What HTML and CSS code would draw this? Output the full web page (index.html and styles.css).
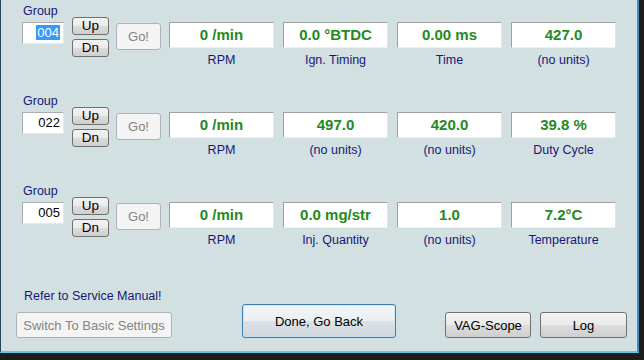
FILE: index.html
```html
<!DOCTYPE html>
<html lang="en">
<head>
    <meta charset="UTF-8">
    <title>Measuring Blocks</title>
    <link rel="stylesheet" href="styles.css">
</head>
<body>
    <div class="window">
        <div class="row">
            <div class="group">
                <div class="caption">Group</div>
                <div class="grp_input"><span class="sel">004</span></div>
            </div>
            <div class="updn">
                <button class="btn small">Up</button>
                <button class="btn small">Dn</button>
            </div>
            <button class="btn go" disabled>Go!</button>
            <div class="metric"><div class="value">0 /min</div><div class="caption">RPM</div></div>
            <div class="metric"><div class="value">0.0 °BTDC</div><div class="caption">Ign. Timing</div></div>
            <div class="metric"><div class="value">0.00 ms</div><div class="caption">Time</div></div>
            <div class="metric"><div class="value">427.0</div><div class="caption">(no units)</div></div>
        </div>

        <div class="row">
            <div class="group">
                <div class="caption">Group</div>
                <div class="grp_input">022</div>
            </div>
            <div class="updn">
                <button class="btn small">Up</button>
                <button class="btn small">Dn</button>
            </div>
            <button class="btn go" disabled>Go!</button>
            <div class="metric"><div class="value">0 /min</div><div class="caption">RPM</div></div>
            <div class="metric"><div class="value">497.0</div><div class="caption">(no units)</div></div>
            <div class="metric"><div class="value">420.0</div><div class="caption">(no units)</div></div>
            <div class="metric"><div class="value">39.8 %</div><div class="caption">Duty Cycle</div></div>
        </div>

        <div class="row">
            <div class="group">
                <div class="caption">Group</div>
                <div class="grp_input">005</div>
            </div>
            <div class="updn">
                <button class="btn small">Up</button>
                <button class="btn small">Dn</button>
            </div>
            <button class="btn go" disabled>Go!</button>
            <div class="metric"><div class="value">0 /min</div><div class="caption">RPM</div></div>
            <div class="metric"><div class="value">0.0 mg/str</div><div class="caption">Inj. Quantity</div></div>
            <div class="metric"><div class="value">1.0</div><div class="caption">(no units)</div></div>
            <div class="metric"><div class="value">7.2°C</div><div class="caption">Temperature</div></div>
        </div>

        <div class="bottom">
            <div class="notes">
                <div class="caption">Refer to Service Manual!</div>
                <button class="btn basic" disabled>Switch To Basic Settings</button>
            </div>
            <button class="btn done">Done, Go Back</button>
            <button class="btn scope">VAG-Scope</button>
            <button class="btn log">Log</button>
        </div>
    </div>
</body>
</html>
```

FILE: styles.css
```css
*, *:after, *:before {
    box-sizing: border-box;
}

body {
    margin: 0;
    background: #1c1c1c;
    font-family: "Liberation Sans", Arial, sans-serif;
    font-size: 12px;
    width: 644px;
    height: 360px;
    overflow: hidden;
}

.window {
    width: 639px;
    height: 353px;
    background: #d3e0e1;
    border-left: 1px solid #26415c;
    border-right: 2px solid #3d8cc4;
    border-bottom: 2px solid #5fc6ea;
}

.caption {
    color: #17177a;
    font-size: 12.5px;
    line-height: 14px;
    white-space: nowrap;
}

.row {
    display: flex;
    align-items: flex-start;
    height: 90px;
    padding-left: 21px;
}

.group {
    width: 42px;
    padding-top: 4px;
}

.group .caption {
    padding-left: 1px;
    margin-bottom: 4px;
}

.grp_input {
    height: 22px;
    background: #fff;
    border: 1px solid;
    border-color: #abadb3 #e3e9ef #e3e9ef #abadb3;
    font-size: 13px;
    line-height: 20px;
    text-align: right;
    padding-right: 3px;
}

.sel {
    background: #3399ff;
    color: #fff;
    padding: 0 1px;
}

.btn {
    font-family: "Liberation Sans", Arial, sans-serif;
    font-size: 13px;
    color: #000;
    border: 1px solid #707070;
    border-radius: 3px;
    background: linear-gradient(#f2f2f2 0%, #ebebeb 50%, #dddddd 50%, #cfcfcf 100%);
    padding: 0;
    margin: 0;
}

.btn:disabled {
    background: #f4f4f4;
    border-color: #adb2b5;
    color: #838383;
}

.updn {
    display: flex;
    flex-direction: column;
    gap: 4px;
    margin-left: 8px;
    padding-top: 17px;
}

.small {
    width: 37px;
    height: 18px;
    line-height: 16px;
    font-size: 13.5px;
}

.go {
    width: 45px;
    height: 27px;
    margin-left: 7px;
    margin-top: 23px;
}

.metric {
    width: 105px;
    margin-left: 9px;
    padding-top: 22px;
    text-align: center;
}

.go + .metric {
    margin-left: 8px;
}

.value {
    height: 26px;
    background: #fff;
    border: 1px solid;
    border-color: #a0a0a0 #e3e3e3 #f0f0f0 #a0a0a0;
    color: #238a1c;
    font-weight: bold;
    font-size: 15px;
    line-height: 24px;
    white-space: nowrap;
}

.metric .caption {
    margin-top: 5px;
}

.bottom {
    display: flex;
    align-items: flex-end;
    height: 81px;
    padding-left: 15px;
    padding-bottom: 13px;
}

.notes .caption {
    padding-left: 8px;
    margin-bottom: 9px;
}

.basic {
    width: 156px;
    height: 26px;
}

.done {
    width: 154px;
    height: 34px;
    margin-left: 70px;
    border-color: #3c7fb1;
    box-shadow: inset 0 0 0 1px rgba(190, 230, 250, 0.7);
    background: linear-gradient(#f3f6f8 0%, #ebeff2 50%, #dde2e6 50%, #cfd6db 100%);
}

.scope {
    width: 86px;
    height: 26px;
    margin-left: 49px;
}

.log {
    width: 87px;
    height: 26px;
    margin-left: 9px;
}
```
